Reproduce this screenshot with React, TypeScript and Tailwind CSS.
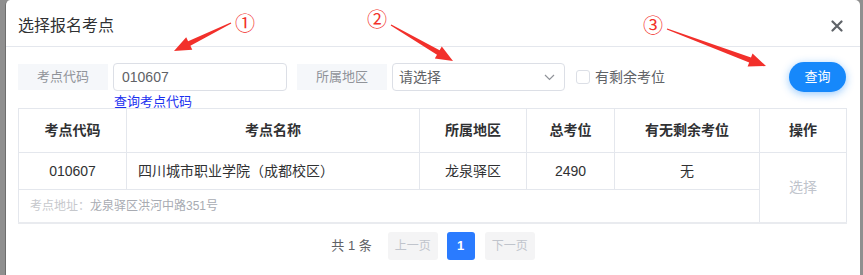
import React from 'react';

type Pt = [number, number];

// tapered red annotation arrow, tail -> tip
const arrowPoints = (t: Pt, p: Pt) => {
  const dx = p[0] - t[0];
  const dy = p[1] - t[1];
  const len = Math.hypot(dx, dy);
  const ux = dx / len;
  const uy = dy / len;
  const nx = -uy;
  const ny = ux;
  const L = 17;
  const W = 7;
  const w = 2.6;
  const b: Pt = [p[0] - ux * L, p[1] - uy * L];
  const pts: Pt[] = [
    [t[0] + nx * 0.6, t[1] + ny * 0.6],
    [b[0] + nx * w, b[1] + ny * w],
    [b[0] + nx * W, b[1] + ny * W],
    p,
    [b[0] - nx * W, b[1] - ny * W],
    [b[0] - nx * w, b[1] - ny * w],
    [t[0] - nx * 0.6, t[1] - ny * 0.6],
  ];
  return pts.map((q) => `${q[0].toFixed(1)},${q[1].toFixed(1)}`).join(' ');
};

const arrows: { tail: Pt; tip: Pt }[] = [
  { tail: [231, 23], tip: [174, 51] },
  { tail: [391, 25], tip: [453, 61] },
  { tail: [667, 29], tip: [766, 66] },
];

const marks = [
  { n: '①', cls: 'left-[235px] top-[11px]' },
  { n: '②', cls: 'left-[367px] top-[7px]' },
  { n: '③', cls: 'left-[643px] top-[13px]' },
];

const cell = 'border border-[#e4e7ed] text-center';

const App = () => {
  return (
    <div
      className="relative w-[863px] h-[275px] overflow-hidden bg-[#8f8f8f]"
      style={{ fontFamily: '"Liberation Sans", "Noto Sans CJK SC", sans-serif' }}
    >
      <div className="ml-[5px] w-[855px] h-[290px] bg-white rounded-t-[5px] border-l border-[#6e6e6e]">
        {/* Header */}
        <div className="h-[47px] border-b border-[#e4e7ed] flex items-center justify-between pl-[12px] pr-[17px] pt-[6px]">
          <h1 className="text-[16px] leading-[22px] text-[#303133]">选择报名考点</h1>
          <svg width="12" height="12" viewBox="0 0 12 12" className="mt-[-1px]">
            <path d="M1.5 1.5 L10.5 10.5 M10.5 1.5 L1.5 10.5" stroke="#5f6368" strokeWidth="2.2" strokeLinecap="round" />
          </svg>
        </div>

        {/* Search bar */}
        <div className="flex items-center h-[30px] mt-[15px] pl-[12px] pr-[14px]">
          <div className="w-[90px] h-[26px] bg-[#f5f7fa] flex items-center justify-center text-[13px] text-[#909399]">
            考点代码
          </div>
          <div className="relative ml-[5px]">
            <div className="w-[174px] h-[28px] border border-[#dcdfe6] rounded-[4px] flex items-center px-[8px] text-[14px] text-[#606266]">
              010607
            </div>
            <a className="absolute left-[1px] top-[31px] whitespace-nowrap text-[13px] leading-[16px] text-[#1a30f0]">
              查询考点代码
            </a>
          </div>
          <div className="ml-[10px] w-[90px] h-[26px] bg-[#f5f7fa] flex items-center justify-center text-[13px] text-[#909399]">
            所属地区
          </div>
          <div className="ml-[5px] w-[173px] h-[28px] border border-[#dcdfe6] rounded-[4px] flex items-center justify-between pl-[6px] pr-[9px] text-[14px] text-[#606266]">
            <span>请选择</span>
            <svg width="11" height="7" viewBox="0 0 11 7">
              <path d="M1 1 L5.5 5.5 L10 1" stroke="#909399" strokeWidth="1.2" fill="none" />
            </svg>
          </div>
          <label className="ml-[11px] flex items-center gap-[5px] text-[14px] text-[#606266]">
            <span className="w-[14px] h-[14px] border border-[#dcdfe6] rounded-[3px] bg-white" />
            有剩余考位
          </label>
          <button className="ml-auto w-[57px] h-[30px] rounded-full bg-[#1688fb] text-white text-[13px] shadow-[0_2px_8px_rgba(22,136,251,0.45)]">
            查询
          </button>
        </div>

        {/* Table */}
        <div className="mt-[16px] pl-[12px]">
          <table className="w-[828px] table-fixed border-collapse border-b-2 border-[#e9ebef] text-[14px] text-[#303133]">
            <colgroup>
              <col className="w-[108px]" />
              <col className="w-[293px]" />
              <col className="w-[107px]" />
              <col className="w-[88px]" />
              <col className="w-[145px]" />
              <col className="w-[87px]" />
            </colgroup>
            <thead>
              <tr className="h-[44px] font-bold">
                <th className={cell}>考点代码</th>
                <th className={cell}>考点名称</th>
                <th className={cell}>所属地区</th>
                <th className={cell}>总考位</th>
                <th className={cell}>有无剩余考位</th>
                <th className={cell}>操作</th>
              </tr>
            </thead>
            <tbody>
              <tr className="h-[37px]">
                <td className={cell}>010607</td>
                <td className="border border-[#e4e7ed] pl-[11px]">四川城市职业学院（成都校区）</td>
                <td className={cell}>龙泉驿区</td>
                <td className={cell}>2490</td>
                <td className={cell}>无</td>
                <td rowSpan={2} className={`${cell} text-[#c0c4cc]`}>
                  选择
                </td>
              </tr>
              <tr className="h-[33px]">
                <td colSpan={5} className="border border-[#e4e7ed] pl-[11px] text-[12px]">
                  <span className="text-[#c6c8cc]">考点地址：</span>
                  <span className="text-[#a8abb2]">龙泉驿区洪河中路351号</span>
                </td>
              </tr>
            </tbody>
          </table>
        </div>

        {/* Pagination */}
        <div className="mt-[8px] flex items-center justify-center text-[12px]">
          <span className="mr-[16px] text-[13px] text-[#606266]">共 1 条</span>
          <span className="w-[50px] h-[28px] rounded-[3px] bg-[#f4f4f5] text-[#c0c4cc] flex items-center justify-center">
            上一页
          </span>
          <span className="ml-[9px] w-[28px] h-[28px] rounded-[3px] bg-[#2a7bff] text-white font-bold text-[13px] flex items-center justify-center">
            1
          </span>
          <span className="ml-[10px] w-[50px] h-[28px] rounded-[3px] bg-[#f4f4f5] text-[#c0c4cc] flex items-center justify-center">
            下一页
          </span>
        </div>
      </div>

      {/* Annotations */}
      <svg className="absolute inset-0 pointer-events-none" width="863" height="275">
        {arrows.map((a, i) => (
          <polygon key={i} points={arrowPoints(a.tail, a.tip)} fill="#f2302b" />
        ))}
      </svg>
      {marks.map((m) => (
        <span
          key={m.n}
          className={`absolute ${m.cls} text-[20px] leading-[24px] text-[#f2302b]`}
          style={{ fontFamily: '"Noto Sans CJK SC", sans-serif' }}
        >
          {m.n}
        </span>
      ))}
    </div>
  );
};

export default App;
